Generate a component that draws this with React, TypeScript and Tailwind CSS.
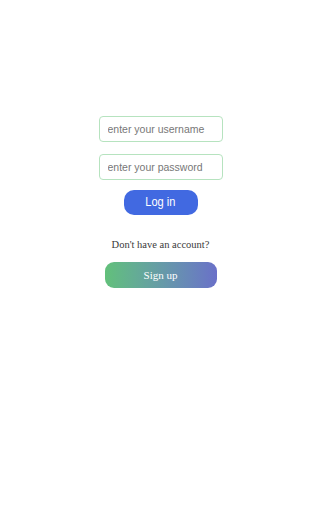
import { useState } from 'react';

export default function App() {
  const [username, setUsername] = useState('');
  const [password, setPassword] = useState('');

  return (
    <div className="min-h-[512px] w-full bg-white flex flex-col items-center pt-[116px] pr-[5px]">
      {/* Form login */}
      <form className="flex flex-col items-center" onSubmit={(e) => e.preventDefault()}>
        <input
          type="text"
          value={username}
          onChange={(e) => setUsername(e.target.value)}
          placeholder="enter your username"
          className="w-[124px] h-[26px] px-[8px] rounded-[4px] border border-[#b6e3bf] text-[10.5px] text-[#333] placeholder:text-[#777] outline-none font-['Liberation_Sans',Arial,sans-serif]"
        />
        <input
          type="password"
          value={password}
          onChange={(e) => setPassword(e.target.value)}
          placeholder="enter your password"
          className="mt-[12px] w-[124px] h-[26px] px-[8px] rounded-[4px] border border-[#b6e3bf] text-[10.5px] text-[#333] placeholder:text-[#777] outline-none font-['Liberation_Sans',Arial,sans-serif]"
        />
        <button
          type="submit"
          className="mt-[10px] w-[74px] h-[25px] rounded-[10px] bg-[#4169e1] text-white text-[13.5px] font-['Liberation_Sans',Arial,sans-serif]"
        >
          <span className="inline-block scale-x-[0.82]">Log in</span>
        </button>
      </form>

      <p className="mt-[22px] text-[10.5px] leading-[15px] text-[#3a3a3a] font-['Liberation_Serif','Times_New_Roman',serif]">
        Don't have an account?
      </p>
      <button className="mt-[10px] w-[112px] h-[26px] rounded-[9px] bg-gradient-to-r from-[#62c07a] to-[#6a70c8] text-white text-[11px] font-['Liberation_Serif','Times_New_Roman',serif]">
        Sign up
      </button>
    </div>
  );
}
